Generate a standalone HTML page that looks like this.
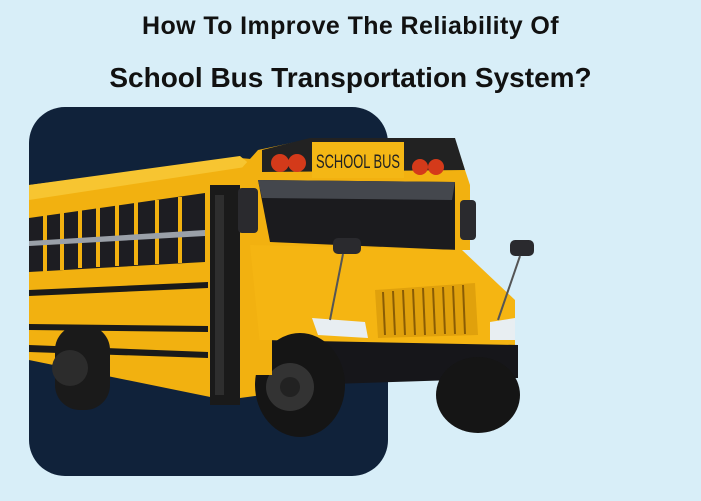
<!DOCTYPE html>
<html><head><meta charset="utf-8"><style>
html,body{margin:0;padding:0;width:701px;height:501px;overflow:hidden;background:#d8eef8;}
.t{position:absolute;left:0;width:701px;text-align:center;font-family:"Liberation Sans",sans-serif;font-weight:bold;color:#111;line-height:1;white-space:nowrap;}
</style></head><body>
<div class="t" style="top:14px;font-size:25px;letter-spacing:0.4px;">How To Improve The Reliability Of</div>
<div class="t" style="top:64px;font-size:28px;letter-spacing:0px;">School Bus Transportation System?</div>
<svg width="701" height="501" style="position:absolute;left:0;top:0">
<rect x="29" y="107" width="359" height="369" rx="36" fill="#10223a"/>
<polygon points="29,185 240,158 262,160 262,395 225,400 29,360" fill="#f2b110"/>
<polygon points="29,185 240,156 252,166 29,200" fill="#f7c531"/>
<polygon points="29,218 205,193 205,262 29,272" fill="#1d1d22"/>
<g stroke="#f2b110" stroke-width="4">
<line x1="45" y1="214" x2="45" y2="272"/><line x1="62" y1="212" x2="62" y2="270"/>
<line x1="80" y1="209" x2="80" y2="268"/><line x1="98" y1="207" x2="98" y2="267"/>
<line x1="117" y1="204" x2="117" y2="266"/><line x1="136" y1="202" x2="136" y2="265"/>
<line x1="157" y1="200" x2="157" y2="264"/><line x1="180" y1="197" x2="180" y2="263"/>
</g>
<polygon points="29,241 205,230 205,236 29,246" fill="#9aa0a8"/>
<polygon points="29,290 208,282 208,288 29,296" fill="#1a1a1a"/>
<polygon points="29,324 208,326 208,332 29,330" fill="#1a1a1a"/>
<polygon points="29,345 208,352 208,358 29,352" fill="#1a1a1a"/>
<rect x="210" y="185" width="30" height="220" fill="#1a1a1a"/>
<rect x="215" y="195" width="9" height="200" fill="#2e2e2e"/>
<polygon points="240,170 258,150 305,140 455,140 470,185 470,250 240,250" fill="#f2b110"/>
<polygon points="262,150 310,138 455,138 465,170 262,172" fill="#222"/>
<rect x="312" y="142" width="92" height="36" fill="#f4b715"/>
<text x="316" y="168" font-family="Liberation Sans,sans-serif" font-size="19" textLength="84" lengthAdjust="spacingAndGlyphs" fill="#222">SCHOOL BUS</text>
<circle cx="280" cy="163" r="9" fill="#d43a1a"/><circle cx="297" cy="163" r="9" fill="#d43a1a"/>
<circle cx="420" cy="167" r="8" fill="#d43a1a"/><circle cx="436" cy="167" r="8" fill="#d43a1a"/>
<polygon points="258,180 455,182 455,250 270,242" fill="#1b1b1e"/>
<polygon points="258,180 455,182 452,200 262,198" fill="#44474d"/>
<polygon points="250,245 462,250 515,300 515,345 260,345" fill="#f5b512"/>
<polygon points="375,290 475,283 478,335 378,338" fill="#e0a10c"/>
<g stroke="#8a5d05" stroke-width="2"><line x1="383" y1="292" x2="385" y2="335"/><line x1="393" y1="291" x2="395" y2="335"/><line x1="403" y1="290" x2="405" y2="335"/><line x1="413" y1="289" x2="415" y2="335"/><line x1="423" y1="288" x2="425" y2="335"/><line x1="433" y1="288" x2="435" y2="334"/><line x1="443" y1="287" x2="445" y2="334"/><line x1="453" y1="286" x2="455" y2="334"/><line x1="463" y1="285" x2="465" y2="334"/></g>
<polygon points="312,318 365,322 368,338 318,335" fill="#e8eef2"/>
<polygon points="490,322 515,318 515,340 490,340" fill="#e8eef2"/>
<polygon points="262,340 518,345 518,378 300,385" fill="#16161a"/>
<rect x="238" y="188" width="20" height="45" rx="4" fill="#2a2a2e"/>
<rect x="460" y="200" width="16" height="40" rx="4" fill="#2a2a2e"/>
<rect x="333" y="238" width="28" height="16" rx="5" fill="#2a2a2e"/>
<rect x="510" y="240" width="24" height="16" rx="5" fill="#2a2a2e"/>
<line x1="343" y1="254" x2="330" y2="320" stroke="#555" stroke-width="2"/>
<line x1="520" y1="256" x2="498" y2="320" stroke="#555" stroke-width="2"/>
<rect x="55" y="325" width="55" height="85" rx="25" fill="#1a1a1a"/>
<circle cx="70" cy="368" r="18" fill="#2c2c2c"/>
<ellipse cx="300" cy="385" rx="45" ry="52" fill="#151515"/>
<circle cx="290" cy="387" r="24" fill="#333"/><circle cx="290" cy="387" r="10" fill="#222"/>
<ellipse cx="478" cy="395" rx="42" ry="38" fill="#151515"/>
<rect x="250" y="340" width="22" height="35" fill="#f2b110"/>
</svg>
</body></html>
